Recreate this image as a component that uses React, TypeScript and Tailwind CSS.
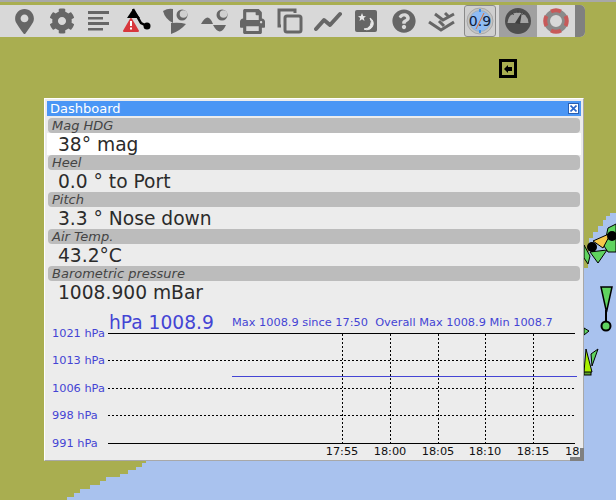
import React from 'react';
import { FaPrint, FaQuestionCircle, FaCog, FaMapMarkerAlt } from 'react-icons/fa';

const rows = [
  { label: 'Mag HDG', value: '38° mag', active: true },
  { label: 'Heel', value: '0.0 ° to Port' },
  { label: 'Pitch', value: '3.3 ° Nose down' },
  { label: 'Air Temp.', value: '43.2°C' },
  { label: 'Barometric pressure', value: '1008.900 mBar' },
];

const yLabels = [
  { y: 337, text: '1021 hPa' },
  { y: 364, text: '1013 hPa' },
  { y: 392, text: '1006 hPa' },
  { y: 419, text: '998 hPa' },
  { y: 447, text: '991 hPa' },
];

const times = [
  { x: 342, text: '17:55' },
  { x: 390, text: '18:00' },
  { x: 438, text: '18:05' },
  { x: 485, text: '18:10' },
  { x: 533, text: '18:15' },
];

function Icon({ children, className = '' }: { children: React.ReactNode; className?: string }) {
  return <div className={`flex h-[32px] w-[38px] shrink-0 items-center justify-center text-[#666666] ${className}`}>{children}</div>;
}

function Moon({ cx, cy }: { cx: number; cy: number }) {
  return (
    <g>
      <circle cx={cx} cy={cy} r="5.5" fill="#666666" />
      <circle cx={cx + 1.5} cy={cy - 1} r="3.8" fill="#d0d0d0" />
    </g>
  );
}

function Toolbar() {
  return (
    <div className="relative mt-[5px] flex h-[32px] w-[585px] items-center rounded-r-[5px] bg-[#d8d8d8] pl-[5px]">
      <Icon><FaMapMarkerAlt size={25} /></Icon>
      <Icon><FaCog size={26} /></Icon>
      <Icon>
        <svg width="24" height="22" viewBox="0 0 24 22" fill="#666666" className="mr-[3px]">
          <rect x="1" y="1" width="21" height="3" />
          <rect x="1" y="7" width="15" height="2.5" />
          <rect x="1" y="12" width="21" height="3" />
          <rect x="1" y="18" width="15" height="2.5" />
        </svg>
      </Icon>
      <Icon>
        <svg width="30" height="30" viewBox="0 0 30 30">
          <path d="M10 3 L18 17 L24 20" fill="none" stroke="#000" strokeWidth="2.5" />
          <path d="M4 12 L10 3 L17 12 Z" fill="#000" />
          <circle cx="24" cy="20" r="3.5" fill="#000" />
          <path d="M8 13 L15 25 L1 25 Z" fill="#d8373c" stroke="#d8373c" strokeWidth="2" strokeLinejoin="round" />
          <rect x="7" y="15" width="2" height="5" fill="#fff" />
          <rect x="7" y="21.5" width="2" height="2" fill="#fff" />
        </svg>
      </Icon>
      <Icon>
        <svg width="28" height="28" viewBox="0 0 28 28" fill="#666666">
          <path d="M1 4 Q6 1 11 2 L11 16 Q3 12 1 4 Z" />
          <path d="M9 16 Q18 15 24 17 Q18 24 9 27 Z" />
          <Moon cx={20} cy={8} />
        </svg>
      </Icon>
      <Icon>
        <svg width="28" height="28" viewBox="0 0 28 28" fill="#666666">
          <path d="M1 17 Q8 4 13 17 Z" />
          <path d="M13 18 L26 18 Q20 31 13 18 Z" />
          <Moon cx={22} cy={8} />
        </svg>
      </Icon>
      <Icon><FaPrint size={25} /></Icon>
      <Icon>
        <svg width="26" height="26" viewBox="0 0 26 26" fill="none" stroke="#666666" strokeWidth="3">
          <path d="M4 18 L2 18 L2 2 L18 2 L18 5" />
          <rect x="8" y="8" width="16" height="16" rx="2" />
        </svg>
      </Icon>
      <Icon>
        <svg width="28" height="22" viewBox="0 0 28 22" fill="none" stroke="#666666" strokeWidth="4" strokeLinejoin="round" strokeLinecap="round">
          <path d="M2 19 L10 10 L16 15 L26 4" />
        </svg>
      </Icon>
      <Icon>
        <svg width="22" height="22" viewBox="0 0 22 22">
          <rect width="22" height="22" rx="2" fill="#666666" />
          <path d="M7 3 L8.2 6 L11 6.2 L8.8 8 L9.5 11 L7 9.3 L4.5 11 L5.2 8 L3 6.2 L5.8 6 Z" fill="#e8e8e8" />
          <path d="M15 8 A7 7 0 0 1 9 19 A6 6 0 0 0 15 8 Z" fill="#e8e8e8" stroke="#e8e8e8" />
        </svg>
      </Icon>
      <Icon><FaQuestionCircle size={24} /></Icon>
      <Icon>
        <svg width="28" height="24" viewBox="0 0 28 24" fill="none" stroke="#666666" strokeWidth="3" strokeLinejoin="miter">
          <path d="M7 5 L15 11 L26 5" />
          <path d="M17 4 L21 8" />
          <path d="M1 13 L13 21 L26 13" />
          <path d="M11 12 L16 17" />
        </svg>
      </Icon>
      <Icon>
        <div className="flex h-[32px] w-[32px] items-center justify-center rounded-[3px] border border-[#8a8a8a] bg-[#cfcfcf]">
          <svg width="28" height="28" viewBox="0 0 28 28" className="font-['DejaVu_Sans',sans-serif]">
            <circle cx="14" cy="14" r="13" fill="#c4c4c4" stroke="#a8a8a8" />
            <circle cx="14" cy="14" r="10.5" fill="#8fbcf4" stroke="#9fb0c0" />
            <path d="M18 6 L10 22" stroke="#e07030" strokeWidth="1" />
            <rect x="13" y="2" width="2" height="3" fill="#3a90f0" />
            <rect x="13" y="23" width="2" height="3" fill="#3a90f0" />
            <text x="14" y="19" fontSize="14" textAnchor="middle" fill="#10203a">0.9</text>
          </svg>
        </div>
      </Icon>
      <Icon className="bg-[#a0a0a0]">
        <svg width="28" height="28" viewBox="0 0 28 28">
          <circle cx="14" cy="14" r="13" fill="#4e4e4e" />
          <path d="M3.5 16 A10.5 10.5 0 0 1 24.500 16 Z" fill="#a4a4a4" />
          <path d="M11 16 L18 5 L16 17 Z" fill="#3e3e3e" />
          <path d="M14 3.5 V6 M8 5.500 L9.500 8 M20 5.500 L18.500 8" stroke="#3e3e3e" />
        </svg>
      </Icon>
      <Icon>
        <svg width="26" height="26" viewBox="0 0 26 26" fill="none">
          <circle cx="13" cy="13" r="9" stroke="#8a8a8a" strokeWidth="6" />
          <path d="M8 3.500 A11 11 0 0 1 18 3.500" stroke="#c75a5a" strokeWidth="4" />
          <path d="M8 22.500 A11 11 0 0 0 18 22.500" stroke="#c75a5a" strokeWidth="4" />
          <path d="M3.500 8 A11 11 0 0 0 3.500 18" stroke="#c75a5a" strokeWidth="4" />
          <path d="M22.500 8 A11 11 0 0 1 22.500 18" stroke="#c75a5a" strokeWidth="4" />
        </svg>
      </Icon>
      <div className="h-[32px] w-[10px] rounded-r-[5px] bg-[#808080]" />
    </div>
  );
}

function Chart() {
  const blue = '#4444d4';
  return (
    <svg width="534" height="155" viewBox="47 303 534 155" className="block font-['DejaVu_Sans',sans-serif]">
      <text x="109" y="329" fontSize="18.67" fill={blue}>hPa 1008.9</text>
      <text x="232" y="326" fontSize="11.33" fill={blue} xmlSpace="preserve">Max 1008.9 since 17:50  Overall Max 1008.9 Min 1008.7</text>
      {yLabels.map((l) => (
        <text key={l.text} x="52" y={l.y} fontSize="11.33" fill={blue}>{l.text}</text>
      ))}
      <line x1="108" x2="575" y1="333.5" y2="333.5" stroke="#000" />
      <line x1="108" x2="575" y1="443.5" y2="443.5" stroke="#000" />
      {[360.5, 388.5, 415.5].map((y) => (
        <line key={y} x1="108" x2="575" y1={y} y2={y} stroke="#000" strokeDasharray="2 2" />
      ))}
      {times.map((t) => (
        <line key={t.x} x1={t.x + 0.5} x2={t.x + 0.5} y1="334" y2="443" stroke="#000" strokeDasharray="2 2" />
      ))}
      <line x1="232" x2="577" y1="376.5" y2="376.5" stroke={blue} />
      {times.map((t) => (
        <text key={t.text} x={t.x} y="455" fontSize="11.33" textAnchor="middle" fill="#111">{t.text}</text>
      ))}
      <text x="565" y="455" fontSize="11.33" fill="#111">18</text>
    </svg>
  );
}

function Dashboard() {
  return (
    <div className="relative ml-[44px] mt-[61px] h-[363px] w-[540px] border-b border-r border-b-[#a8a8a8] border-r-[#a8a8a8] border-l border-t border-l-white border-t-white bg-[#ececec] px-[2px] pt-[2px] font-['DejaVu_Sans',sans-serif]">
      <div className="flex h-[15px] items-center justify-between bg-[#4a96f5] pl-[3px] pr-[2px] text-[13px] leading-[15px] text-white">
        <span>Dashboard</span>
        <span className="flex h-[11px] w-[11px] items-center justify-center border border-[#2a5fb0] bg-white">
          <svg width="7" height="7" viewBox="0 0 7 7" stroke="#2a66c8" strokeWidth="1.6">
            <path d="M0.5 0.5 L6.5 6.5 M6.5 0.5 L0.5 6.5" />
          </svg>
        </span>
      </div>
      <div className="mt-[2px]">
        {rows.map((r) => (
          <div key={r.label}>
            <div className="mx-px h-[15px] rounded-[4px] bg-[#bcbcbc] pl-[4px] text-[13px] italic leading-[15px] text-[#444444]">{r.label}</div>
            <div className={`h-[22px] pl-[11px] text-[18.67px] leading-[23px] text-[#2b2b2b] ${r.active ? 'bg-white' : ''}`}>{r.value}</div>
          </div>
        ))}
      </div>
      <Chart />
      {/* resize grip */}
      <div className="absolute -bottom-px -right-px h-[4px] w-[14px] bg-[#808080]" />
      <div className="absolute -bottom-px -right-px h-[13px] w-[4px] bg-[#808080]" />
    </div>
  );
}

export default function App() {
  return (
    <div className="relative h-[500px] w-[616px] overflow-hidden bg-[#a9ae50]">
      {/* chart background */}
      <svg width="616" height="500" viewBox="0 0 616 500" className="absolute inset-0">
        <rect width="616" height="2" fill="#a8a8a8" />
        <path
          shapeRendering="crispEdges"
          fill="#a9c2ee"
          d="M616 213 L610 213 L610 216 L606 216 L606 220 L603 220 L603 226 L598 226 L598 232 L593 232 L593 238 L589 238 L589 252 L588 252 L588 268 L584 268 L584 461 L146 461 L146 463 L142 463 L142 467 L136 467 L136 470 L128 470 L128 474 L120 474 L120 477 L106 477 L106 481 L100 481 L100 485 L90 485 L90 489 L80 489 L80 493 L74 493 L74 497 L67 497 L67 500 L616 500 Z"
        />
        <path d="M584 245 L590 256 L588 264 L584 258 Z" fill="#5fd35f" stroke="#000" />
        <path d="M590 252 L607 250 L598 263 Z" fill="#5fd35f" stroke="#000" />
        <path d="M604 246 L608 228 L616 224 L616 252 L608 252 Z" fill="#5fd35f" stroke="#000" />
        <path d="M593 241 L611 233 L603 248 Z" fill="#f5c84a" stroke="#000" />
        <circle cx="592" cy="247" r="5" fill="#000" />
        <circle cx="612" cy="236" r="5" fill="#000" />
        <path d="M601 287 L612 287 L606.500 312 Z" fill="#5fd35f" stroke="#000" strokeWidth="1.5" />
        <line x1="606" x2="606" y1="310" y2="322" stroke="#000" strokeWidth="2" />
        <circle cx="606" cy="326" r="4.500" fill="#5fd35f" stroke="#000" strokeWidth="2" />
        <path d="M584 328 L589 331 L584 335 Z" fill="#5fd35f" stroke="#000" />
        <rect x="584" y="370" width="7" height="5" fill="#5fa030" stroke="#000" />
        <path d="M586 349 L592 372 L584 372 Z" fill="#a8f000" stroke="#000" />
        <path d="M591 354 L598 349 L592 366 Z" fill="#5fd35f" stroke="#000" />
      </svg>

      <div className="relative">
        <Toolbar />
        <Dashboard />
      </div>

      {/* cursor marker */}
      <div className="absolute left-[499px] top-[59px] flex h-[19px] w-[18px] items-center justify-center border-[3px] border-black">
        <svg width="8" height="8" viewBox="0 0 8 8"><path d="M0 4 L4 0 L4 2 L8 2 L8 6 L4 6 L4 8 Z" fill="#000" /></svg>
      </div>
    </div>
  );
}
